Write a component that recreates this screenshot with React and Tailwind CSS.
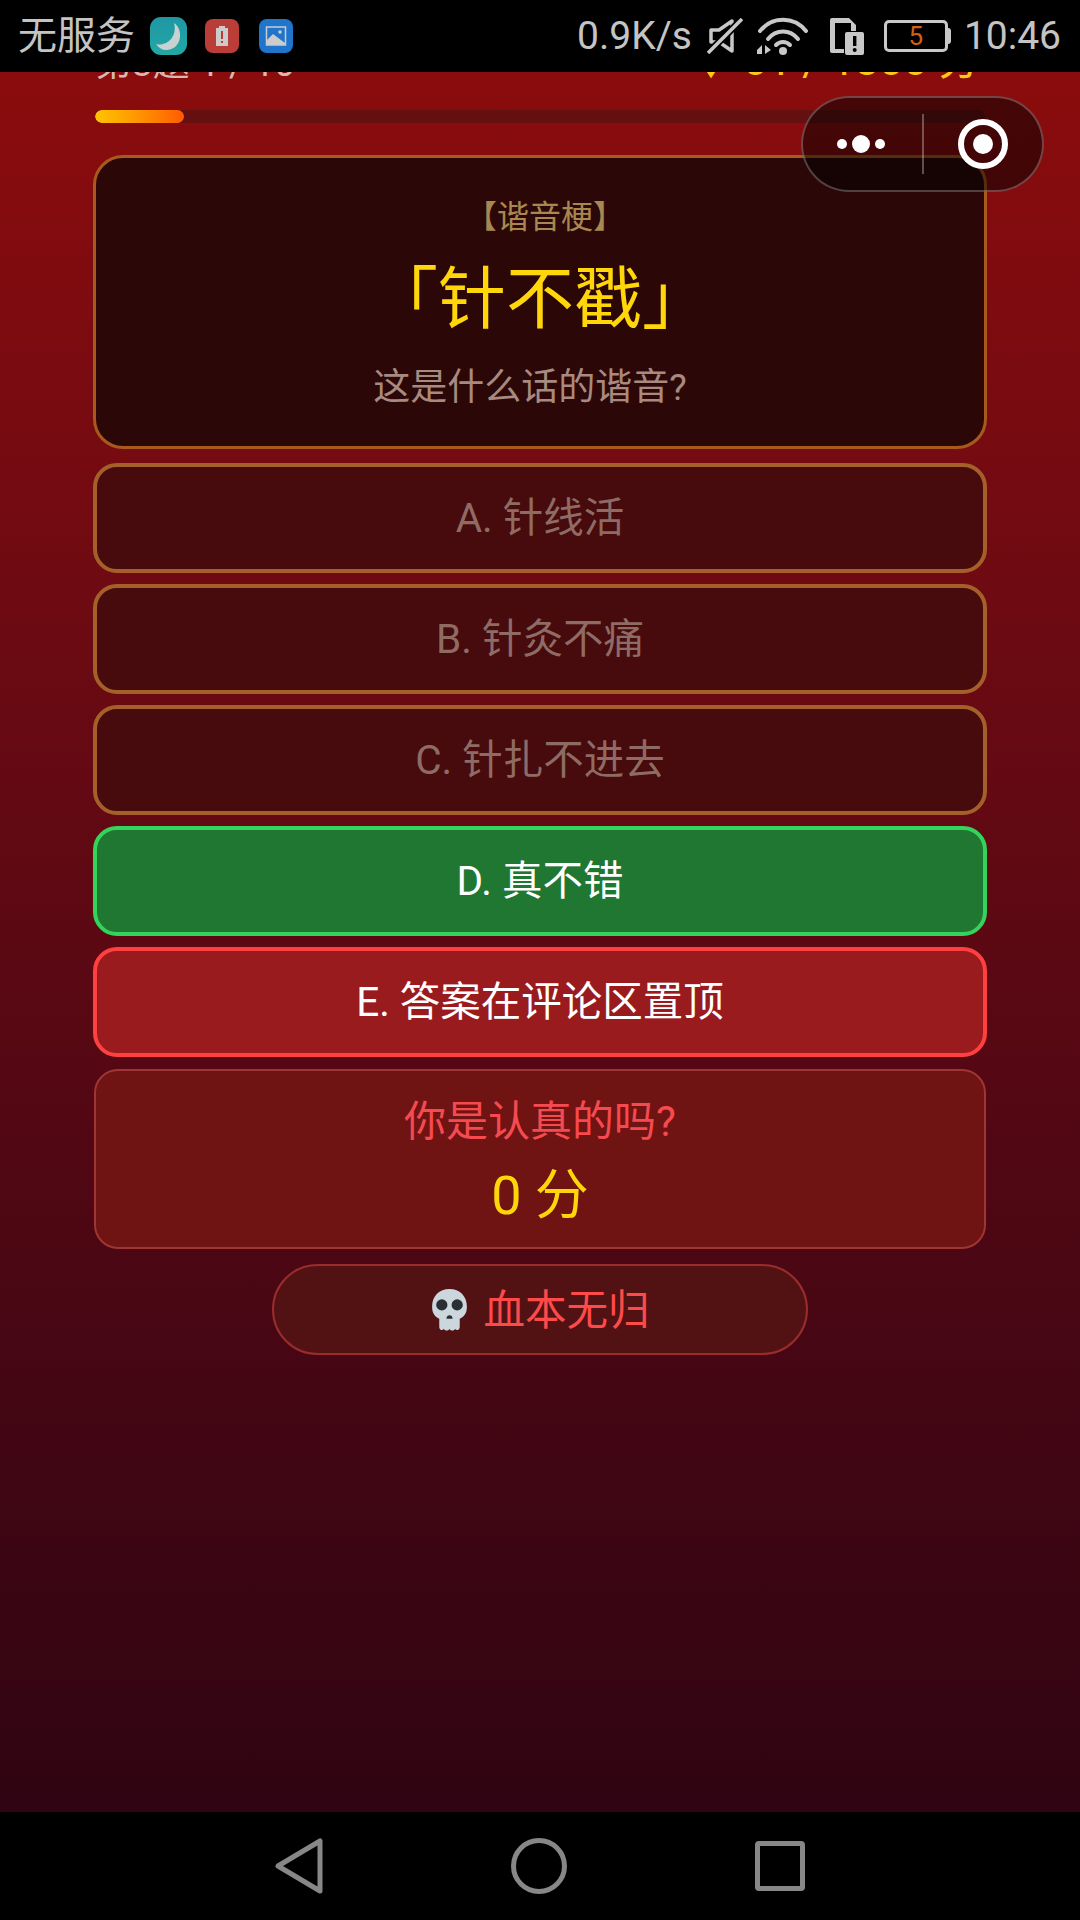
const cjk = { fontFamily: '"Roboto", "Noto Sans CJK SC", sans-serif' }

const options = [
  { text: 'A. 针线活', tone: 'dim' },
  { text: 'B. 针灸不痛', tone: 'dim' },
  { text: 'C. 针扎不进去', tone: 'dim' },
  { text: 'D. 真不错', tone: 'right' },
  { text: 'E. 答案在评论区置顶', tone: 'wrong' },
]

const toneClass = {
  dim: 'border-[#a5602a] bg-[#470a0d] text-[#8e6c64]',
  right: 'border-[#33d35c] bg-[#1f7732] text-white',
  wrong: 'border-[#ff4040] bg-[#991b1e] text-white',
}

function MoonIcon() {
  return (
    <div className="w-[37px] h-[38px] rounded-[11px] bg-gradient-to-b from-[#1f97a3] to-[#23a8a6] flex items-center justify-center">
      <svg viewBox="0 0 37 38" className="w-[37px] h-[38px]">
        <path d="M24 6 C34 12 32 33 16 33 C12 33 9 31 6 27 C16 30 28 20 24 6 Z" fill="#c8d2d2" />
      </svg>
    </div>
  )
}

function BatteryAlertIcon() {
  return (
    <div className="w-[34px] h-[34px] rounded-[8px] bg-[#bb3d38] flex items-center justify-center">
      <svg viewBox="0 0 34 34" className="w-[34px] h-[34px]">
        <rect x="14" y="7" width="6" height="3" fill="#ccc" />
        <rect x="11" y="9" width="12" height="18" fill="#ccc" />
        <rect x="16" y="12" width="2" height="8" fill="#bb3d38" />
        <rect x="16" y="22" width="2" height="2" fill="#bb3d38" />
      </svg>
    </div>
  )
}

function GalleryIcon() {
  return (
    <div className="w-[34px] h-[34px] rounded-[8px] bg-[#1f74cc] flex items-center justify-center">
      <svg viewBox="0 0 34 34" className="w-[34px] h-[34px]">
        <rect x="7.5" y="8" width="19" height="18" fill="none" stroke="#ccc" strokeWidth="1.5" />
        <circle cx="21" cy="13" r="1.8" fill="#ccc" />
        <path d="M8 26 V21 L14 15 L26 24 V26 Z" fill="#ccc" />
      </svg>
    </div>
  )
}

function MuteIcon() {
  return (
    <svg viewBox="0 0 36 36" className="w-[36px] h-[36px]" fill="none" stroke="#c8c8c8" strokeWidth="3.5">
      <path d="M25 3 V33 L12 24 H4 V12 H12 Z" strokeLinejoin="round" />
      <path d="M35 1 L1 35" stroke="#000" strokeWidth="7" />
      <path d="M35 1 L1 35" strokeWidth="3.5" />
    </svg>
  )
}

function WifiIcon() {
  return (
    <svg viewBox="0 0 54 38" className="w-[54px] h-[38px]" fill="none" stroke="#c8c8c8" strokeWidth="4" strokeLinecap="round">
      <path d="M4 14 C16 -1 38 -1 50 14" />
      <path d="M12 22 C20 12 34 12 42 22" />
      <path d="M20 28 C24 24 30 24 34 28" />
      <circle cx="27" cy="34" r="4" fill="#c8c8c8" stroke="none" />
      <path d="M1 37 V33 L6 28 V37 Z M9 28 L15 33 L9 37 Z" fill="#c8c8c8" stroke="none" />
    </svg>
  )
}

function SimAlertIcon() {
  return (
    <svg viewBox="0 0 36 38" className="w-[36px] h-[38px]">
      <path d="M3 1 H20 L27 8 V14 H22 V6 H6 V32 H15 V36 H3 Q1 36 1 34 V3 Q1 1 3 1 Z" fill="#c8c8c8" />
      <rect x="16" y="15" width="19" height="23" rx="2" fill="#c8c8c8" />
      <rect x="24" y="19" width="3.4" height="10" fill="#000" />
      <circle cx="25.7" cy="33" r="2" fill="#000" />
    </svg>
  )
}

function StatusBar() {
  return (
    <div className="relative z-10 h-[72px] bg-black shrink-0 flex items-center justify-between pl-[18px] pr-[19px] text-[#c4c4c4]">
      <div className="flex items-center">
        <span className="text-[39px] leading-none">无服务</span>
        <div className="ml-[15px]"><MoonIcon /></div>
        <div className="ml-[18px]"><BatteryAlertIcon /></div>
        <div className="ml-[20px]"><GalleryIcon /></div>
      </div>
      <div className="flex items-center">
        <span className="text-[39px] leading-none">0.9K/s</span>
        <div className="ml-[15px]"><MuteIcon /></div>
        <div className="ml-[13px]"><WifiIcon /></div>
        <div className="ml-[19px]"><SimAlertIcon /></div>
        <div className="ml-[19px] flex items-center">
          <div className="w-[64px] h-[32px] border-[3px] border-[#c8c8c8] rounded-[5px] flex items-center justify-center text-[#d4600f] text-[26px] leading-none">5</div>
          <div className="w-[3px] h-[16px] bg-[#c8c8c8] rounded-r-sm" />
        </div>
        <span className="ml-[13px] text-[39px] leading-none">10:46</span>
      </div>
    </div>
  )
}

function Capsule() {
  return (
    <div className="absolute left-[801px] top-[96px] w-[243px] h-[96px] rounded-full border-2 border-white/25 bg-black/50 flex items-center z-10">
      <div className="flex-1 flex items-center justify-center gap-[5px] pr-[3px]">
        <span className="w-[10px] h-[10px] rounded-full bg-white" />
        <span className="w-[18px] h-[18px] rounded-full bg-white" />
        <span className="w-[10px] h-[10px] rounded-full bg-white" />
      </div>
      <div className="w-[2px] h-[60px] bg-white/30" />
      <div className="w-[118px] flex items-center justify-center">
        <div className="w-[50px] h-[50px] rounded-full border-[6px] border-white flex items-center justify-center">
          <span className="w-[20px] h-[20px] rounded-full bg-white" />
        </div>
      </div>
    </div>
  )
}

function SkullIcon() {
  return (
    <svg viewBox="0 0 36 42" className="w-[39px] h-[43px]">
      <path d="M18 1 C8 1 1 8 1 18 C1 25 4 28 8 30 V38 C8 41 11 42 12.5 40 C14 42 16.5 42 18 40 C19.5 42 22 42 23.5 40 C25 42 28 41 28 38 V30 C32 28 35 25 35 18 C35 8 28 1 18 1 Z" fill="#ccd6dd" />
      <circle cx="10.5" cy="16.5" r="5.5" fill="#292f33" />
      <circle cx="25.5" cy="16.5" r="5.5" fill="#292f33" />
      <path d="M15 30 C15 25.5 21 25.5 21 30 Z" fill="#292f33" />
    </svg>
  )
}

function NavBar() {
  return (
    <div className="h-[108px] bg-black shrink-0 flex items-center justify-center gap-[188px]">
      <svg viewBox="0 0 48 56" className="w-[48px] h-[56px]" fill="none" stroke="#878787" strokeWidth="5" strokeLinejoin="round">
        <path d="M45 3 V53 L3 28 Z" />
      </svg>
      <div className="w-[56px] h-[56px] rounded-full border-[5px] border-[#878787]" />
      <div className="w-[50px] h-[50px] rounded-[4px] border-[5px] border-[#878787]" />
    </div>
  )
}

export default function App() {
  return (
    <div className="relative w-[1080px] h-[1920px] flex flex-col overflow-hidden" style={cjk}>
      <StatusBar />
      <Capsule />
      {/* page is scrolled a little, the header line is cut off by the status bar */}
      <div className="flex-1 min-h-0 overflow-hidden bg-gradient-to-b from-[#8b0c0c] to-[#300412] px-[93px]">
        <div className="flex items-end justify-between h-[40px] -mt-[30px]">
          <span className="text-[#d8b8b0] pl-[2px] text-[37px] leading-none whitespace-pre">第3题 1 / 10</span>
          <span className="text-[#ffc814] pr-[6px] text-[43px] leading-none whitespace-pre">♦ 01 / 1800 分</span>
        </div>
        <div className="mt-[28px] mx-[2px] h-[13px] rounded-full bg-[#651010] overflow-hidden">
          <div className="h-full w-[89px] rounded-full bg-gradient-to-r from-[#ffc400] to-[#ff5a00]" />
        </div>
        <div className="mt-[32px] h-[294px] rounded-[30px] border-[3px] border-[#a85a1c] bg-[#2c0707] flex flex-col items-center">
          <div className="mt-[39px] pl-[10px] text-[32px] leading-[40px] text-[#a88850]">【谐音梗】</div>
          <div className="mt-[21px] text-[68px] leading-[84px] text-[#ffd60a]">「针不戳」</div>
          <div className="mt-[22px] pr-[20px] text-[37px] leading-[48px] text-[#a88a80]">这是什么话的谐音?</div>
        </div>
        <div className="mt-[14px] flex flex-col gap-[11px]">
          {options.map((o) => (
            <div key={o.text} className={`h-[110px] rounded-[24px] border-4 flex items-center justify-center text-[40.5px] ${toneClass[o.tone]}`}>
              {o.text}
            </div>
          ))}
        </div>
        <div className="mt-[12px] mx-[1px] h-[180px] rounded-[24px] border-2 border-[#a03535] bg-[#701313] flex flex-col items-center">
          <div className="mt-[23px] text-[42px] leading-[56px] text-[#f54a50]">你是认真的吗?</div>
          <div className="mt-[12px] text-[54px] leading-[68px] text-[#ffd60a]">0 分</div>
        </div>
        <div className="mt-[15px] mx-auto w-[536px] h-[91px] rounded-full border-2 border-[#9a2c2c] bg-[#521214] flex items-center justify-center gap-[14px] text-[41.5px] text-[#ff4a4a]">
          <SkullIcon />
          <span className="pt-[3px]">血本无归</span>
        </div>
      </div>
      <NavBar />
    </div>
  )
}
